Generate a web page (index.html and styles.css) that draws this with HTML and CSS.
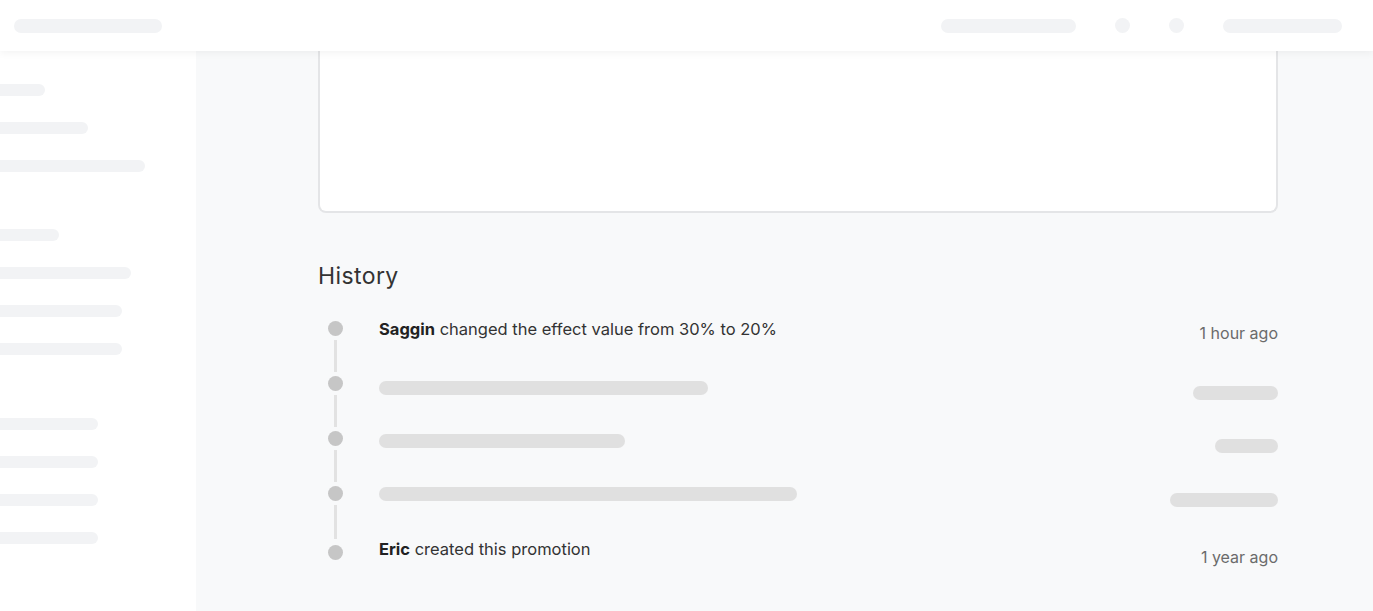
FILE: index.html
```html
<!DOCTYPE html>
<html lang="en">
<head>
<meta charset="utf-8">
<title>Promotion history</title>
<link rel="stylesheet" href="styles.css">
</head>
<body>
<header class="topbar">
  <div class="sk sk-head sk-w148"></div>
  <div class="topbar-right">
    <div class="sk sk-head sk-w135"></div>
    <div class="sk-dot"></div>
    <div class="sk-dot"></div>
    <div class="sk sk-head sk-w119"></div>
  </div>
</header>
<div class="layout">
  <aside class="sidebar">
    <div class="side-group">
      <div class="sk sk-side" style="width:57px"></div>
      <div class="sk sk-side" style="width:100px"></div>
      <div class="sk sk-side" style="width:157px"></div>
    </div>
    <div class="side-group side-group-mid">
      <div class="sk sk-side" style="width:71px"></div>
      <div class="sk sk-side" style="width:143px"></div>
      <div class="sk sk-side" style="width:134px"></div>
      <div class="sk sk-side" style="width:134px"></div>
    </div>
    <div class="side-group">
      <div class="sk sk-side" style="width:110px"></div>
      <div class="sk sk-side" style="width:110px"></div>
      <div class="sk sk-side" style="width:110px"></div>
      <div class="sk sk-side" style="width:110px"></div>
    </div>
  </aside>
  <main class="main">
    <section class="card"></section>
    <h2 class="history-title">History</h2>
    <div class="timeline">
      <div class="rail">
        <span class="rail-dot"></span><span class="rail-line"></span>
        <span class="rail-dot"></span><span class="rail-line"></span>
        <span class="rail-dot"></span><span class="rail-line"></span>
        <span class="rail-dot"></span><span class="rail-line rail-line-last"></span>
        <span class="rail-dot"></span>
      </div>
      <ul class="entries">
        <li class="entry entry-first">
          <p class="entry-text"><strong>Saggin</strong> changed the effect value from 30% to 20%</p>
          <span class="entry-time">1 hour ago</span>
        </li>
        <li class="entry">
          <span class="sk sk-row" style="width:329px"></span>
          <span class="sk sk-time" style="width:85px"></span>
        </li>
        <li class="entry">
          <span class="sk sk-row" style="width:246px"></span>
          <span class="sk sk-time" style="width:63px"></span>
        </li>
        <li class="entry">
          <span class="sk sk-row" style="width:418px"></span>
          <span class="sk sk-time sk-time-low" style="width:108px"></span>
        </li>
        <li class="entry entry-last">
          <p class="entry-text"><strong>Eric</strong> created this promotion</p>
          <span class="entry-time entry-time-low">1 year ago</span>
        </li>
      </ul>
    </div>
  </main>
</div>
</body>
</html>
```
FILE: styles.css
```css
* { box-sizing: border-box; }
html, body {
  margin: 0;
  padding: 0;
  height: 611px;
  overflow: hidden;
  font-family: Inter, "Noto Sans", "Liberation Sans", sans-serif;
  color: #2b2b2b;
  background: #f8f9fa;
}

.sk { display: block; border-radius: 7px; }

.topbar {
  position: relative;
  z-index: 2;
  height: 51px;
  background: #fff;
  display: flex;
  align-items: center;
  justify-content: space-between;
  padding: 0 31px 0 14px;
  box-shadow: 0 2px 8px rgba(0, 0, 0, 0.05);
}
.topbar-right { display: flex; align-items: center; }
.sk-head { height: 14px; background: #f2f3f5; }
.sk-w148 { width: 148px; }
.sk-w135 { width: 135px; margin-right: 39px; }
.sk-w119 { width: 119px; }
.sk-dot {
  width: 15px; height: 15px; border-radius: 50%;
  background: #f2f3f5;
  margin-right: 39px;
}

.layout { display: flex; height: 560px; }

.sidebar {
  width: 196px;
  flex: none;
  background: #fff;
  overflow: hidden;
  padding-top: 33px;
}
.side-group { display: flex; flex-direction: column; gap: 26px; margin-bottom: 57px; }
.side-group-mid { margin-bottom: 63px; }
.sk-side { height: 12px; background: #f2f3f5; margin-left: -12px; border-radius: 6px; }

.main {
  flex: 1;
  padding-left: 122px;
  background: #f8f9fa;
}
.card {
  width: 960px;
  height: 162px;
  background: #fff;
  border: 2px solid #e4e5e7;
  border-top: none;
  border-radius: 0 0 8px 8px;
}
.history-title {
  margin: 49px 0 0;
  font-size: 23px;
  line-height: 28px;
  font-weight: 400;
  letter-spacing: 0.4px;
  color: #333;
}

.timeline {
  display: flex;
  align-items: flex-start;
  width: 960px;
  margin-top: 29px;
}
.rail {
  display: flex;
  flex-direction: column;
  align-items: center;
  width: 15px;
  margin: 1.5px 36px 0 10px;
  flex: none;
}
.rail-dot {
  width: 15px; height: 15px; border-radius: 50%;
  background: #c6c6c6;
}
.rail-line {
  width: 3px; height: 32px;
  margin: 4px 0;
  background: #e2e2e2;
}
.rail-line-last { height: 34px; margin-bottom: 6px; }

.entries {
  list-style: none;
  margin: 0;
  padding: 0;
  flex: 1;
  display: flex;
  flex-direction: column;
  gap: 33px;
}
.entry {
  height: 20px;
  display: flex;
  justify-content: space-between;
  align-items: flex-start;
}
.entry-first { margin-bottom: 6px; }
.entry-last { margin-top: 2px; }
.entry-text {
  margin: 0;
  font-size: 16.5px;
  line-height: 20px;
  color: #333;
}
.entry-text strong { font-weight: 700; color: #222; }
.sk-row { height: 14px; background: #e0e0e0; margin-top: 3px; }
.sk-time { height: 14px; background: #e0e0e0; margin-top: 8px; }
.sk-time-low { margin-top: 9px; }
.entry-time {
  font-size: 16px;
  line-height: 20px;
  color: #6b6b6b;
  margin-top: 4px;
}
.entry-time-low { margin-top: 8px; }
```
